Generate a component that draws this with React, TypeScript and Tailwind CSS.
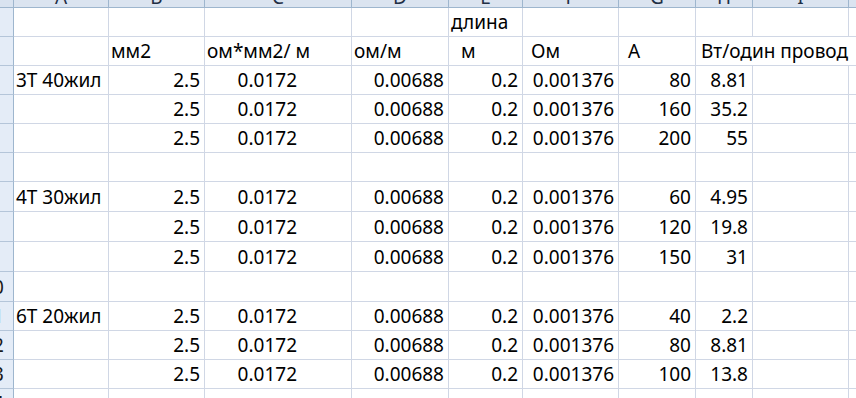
import React from "react";

type Cell = { t: string; r?: boolean; pad?: string; span?: boolean };

const letters = ["A", "B", "C", "D", "E", "F", "G", "H", "I", "J"];

const numRow = (label: string, amp: string, w: string): Record<number, Cell> => ({
  1: { t: label, pad: "pl-[2px]" },
  2: { t: "2.5", r: true, pad: "pr-[4px]" },
  3: { t: "0.0172", r: true, pad: "pr-[54px]" },
  4: { t: "0.00688", r: true, pad: "pr-[4px]" },
  5: { t: "0.2", r: true, pad: "pr-[4px]" },
  6: { t: "0.001376", r: true, pad: "pr-[4px]" },
  7: { t: amp, r: true, pad: "pr-[4px]" },
  8: { t: w, r: true, pad: "pr-[4px]" },
});

const data: Record<number, Record<number, Cell>> = {
  1: { 5: { t: "длина", pad: "pl-[2px]" } },
  2: {
    2: { t: "мм2", pad: "pl-[2px]" },
    3: { t: "ом*мм2/ м", pad: "pl-[2px]" },
    4: { t: "ом/м", pad: "pl-[2px]" },
    5: { t: "м", pad: "pl-[12px]" },
    6: { t: "Ом", pad: "pl-[8px]" },
    7: { t: "А", pad: "pl-[9px]" },
    8: { t: "Вт/один провод", pad: "pl-[5px]", span: true },
  },
  3: numRow("3Т 40жил", "80", "8.81"),
  4: numRow("", "160", "35.2"),
  5: numRow("", "200", "55"),
  7: numRow("4Т 30жил", "60", "4.95"),
  8: numRow("", "120", "19.8"),
  9: numRow("", "150", "31"),
  11: numRow("6Т 20жил", "40", "2.2"),
  12: numRow("", "80", "8.81"),
  13: numRow("", "100", "13.8"),
};

export default function App() {
  const rows = Array.from({ length: 14 }, (_, i) => i + 1);
  const cols = Array.from({ length: 10 }, (_, i) => i + 1);
  return (
    <div className="w-[856px] h-[398px] overflow-hidden bg-white text-black [font-family:'Noto_Sans',sans-serif] text-[19px]">
      <div className="grid grid-cols-[14px_95px_96px_147px_97px_74px_96px_77px_57px_96px_100px] grid-rows-[8px_29px_29px_29px_29px_29px_29px_30px_30px_30px_30px_29px_29px_29px_29px]">
        <div className="bg-[#d9e3f0] border-r border-b border-[#9eb6ce]" />
        {cols.map((c) => (
          <div
            key={"h" + c}
            className="bg-[#dbe4f0] border-r border-b border-[#9eb6ce] overflow-hidden flex items-end justify-center"
          >
            <span className="leading-[19px] text-[#1f2f45] shrink-0">{letters[c - 1]}</span>
          </div>
        ))}
        {rows.map((r) => {
          const rd = data[r] || {};
          const out: React.ReactNode[] = [];
          out.push(
            <div
              key={"rh" + r}
              className="bg-[#e4ecf7] border-r border-b border-r-[#9eb6ce] border-b-[#b4c5d9] overflow-hidden flex items-end pb-[4px]"
            >
              <div className="shrink-0 w-[30px] -ml-[22px] text-center leading-[19px] text-[#1a1a1a]">{r}</div>
            </div>
          );
          for (let c = 1; c <= 10; c++) {
            const cell = rd[c];
            if (cell && cell.span) {
              out.push(
                <div
                  key={r + "-" + c}
                  className={"col-span-3 border-b border-[#d0d7e5] flex items-end pb-[4px] whitespace-nowrap overflow-hidden " + (cell.pad || "")}
                >
                  <span className="leading-[19px]">{cell.t}</span>
                </div>
              );
              c += 2;
              continue;
            }
            out.push(
              <div
                key={r + "-" + c}
                className={
                  "border-r border-b border-[#d0d7e5] flex items-end pb-[4px] whitespace-nowrap overflow-hidden " +
                  (cell && cell.r ? "justify-end " : "justify-start ") +
                  (cell ? cell.pad || "" : "")
                }
              >
                {cell && cell.t ? <span className="leading-[19px]">{cell.t}</span> : null}
              </div>
            );
          }
          return out;
        })}
      </div>
    </div>
  );
}
